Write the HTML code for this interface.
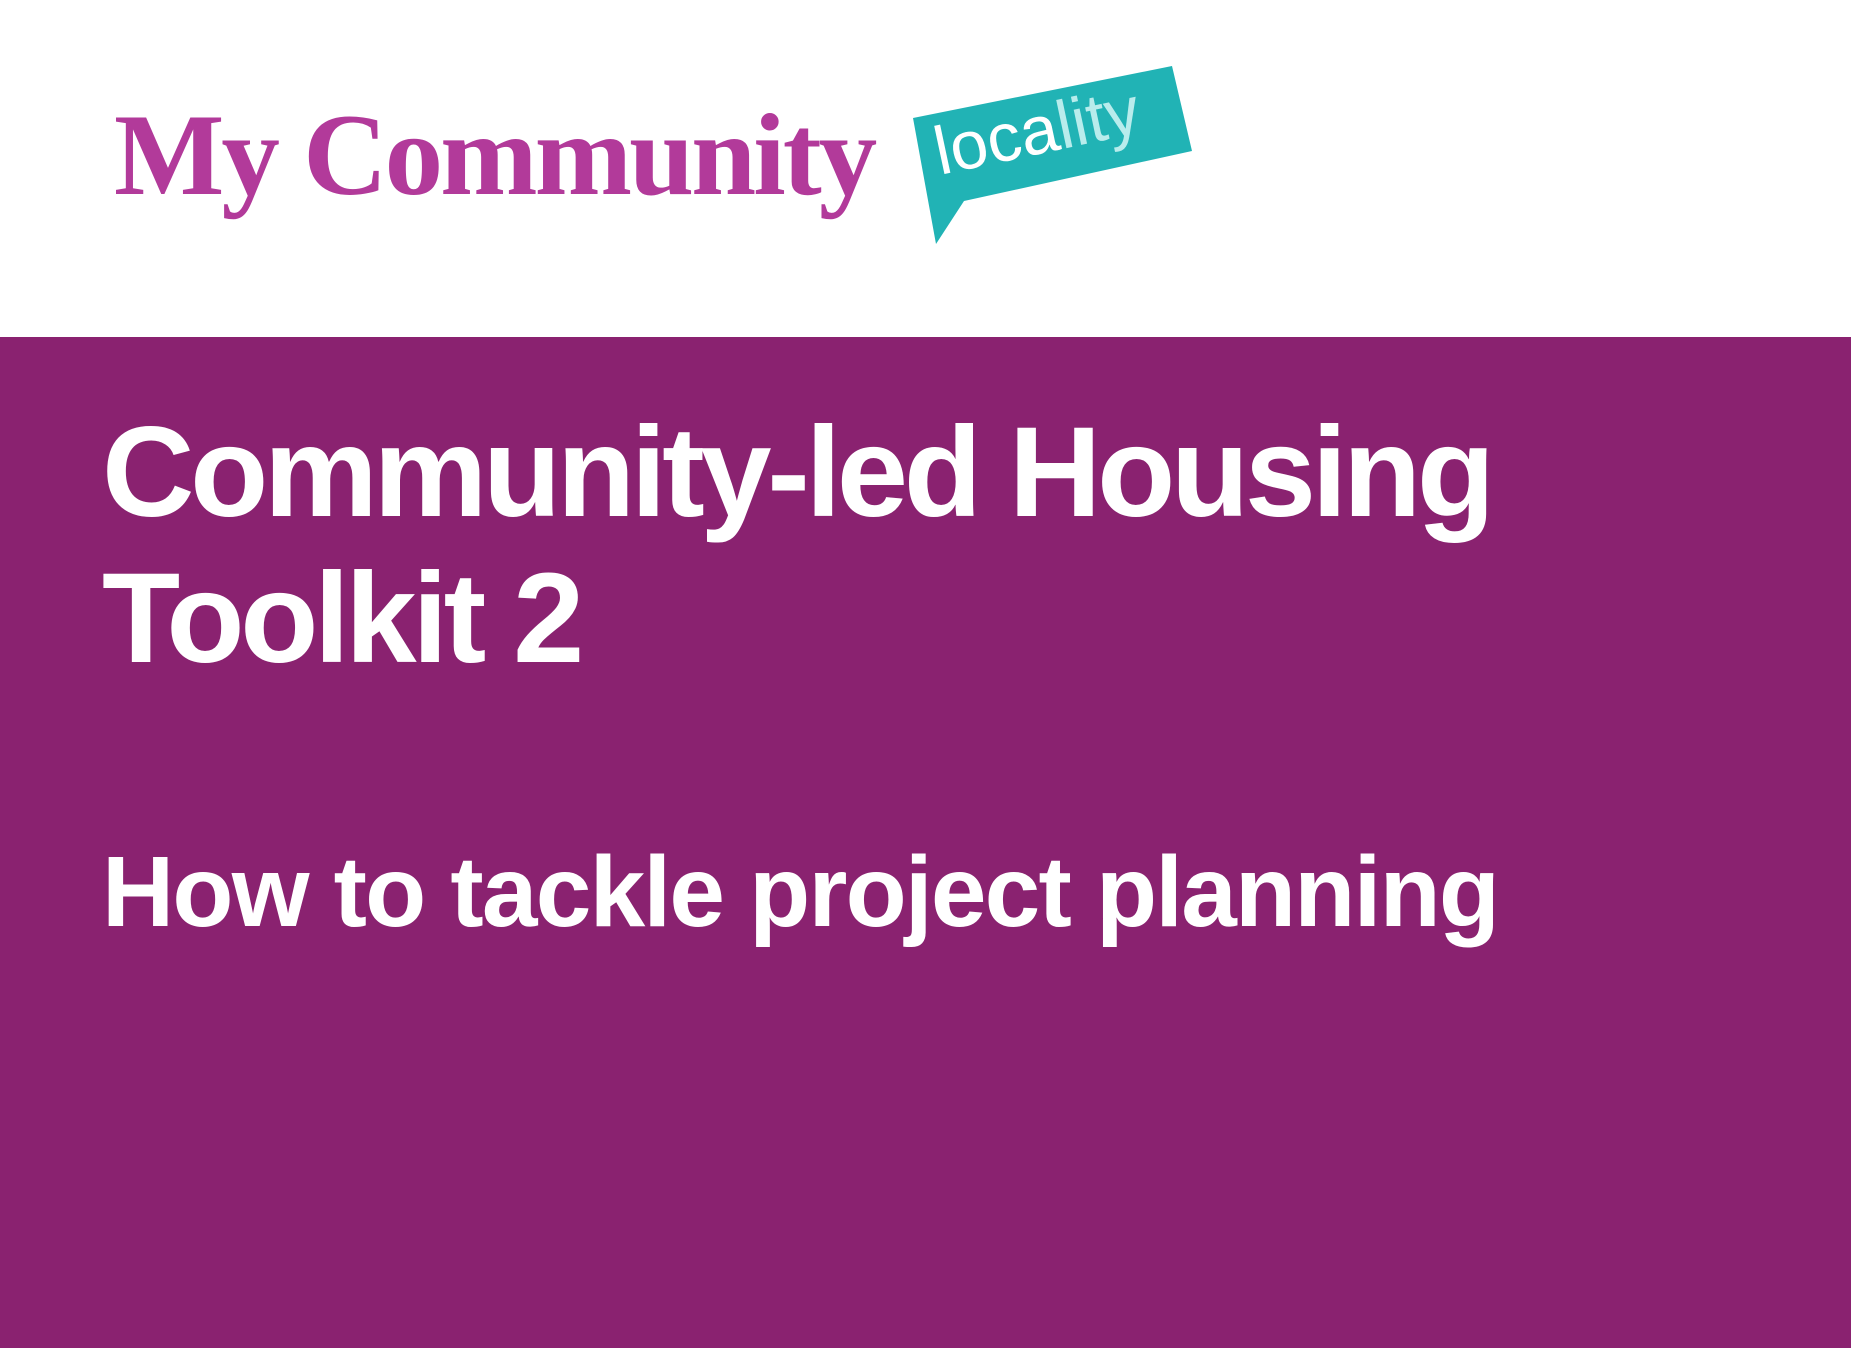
<!DOCTYPE html>
<html><head><meta charset="utf-8"><style>
html,body{margin:0;padding:0}
body{width:1851px;height:1348px;position:relative;background:#fff;overflow:hidden;font-family:"Liberation Sans",sans-serif}
.band{position:absolute;left:0;top:337px;width:1851px;height:1011px;background:#8a2270}
.logo{position:absolute;left:114px;top:89px;font-family:"Liberation Serif",serif;font-weight:bold;font-size:117px;color:#b23a9a;letter-spacing:-3px;white-space:nowrap}
.t{position:absolute;color:#fff;white-space:nowrap;font-weight:bold}
</style></head><body>
<div class="logo">My Community</div>
<svg style="position:absolute;left:0;top:0" width="1851" height="337">
<polygon points="913,118 1172,66 1192,151 964,201 936,244" fill="#21b3b5"/>
<text x="940" y="175" transform="rotate(-12 940 175)" font-family="Liberation Sans" font-size="68" fill="#fff">loca<tspan fill="#b8ecec">lity</tspan></text>
</svg>
<div class="band"></div>
<div class="t" style="left:102px;top:400px;font-size:128px;line-height:146px;letter-spacing:-4.3px">Community-led Housing<br>Toolkit 2</div>
<div class="t" style="left:102px;top:832px;font-size:100px;line-height:120px;letter-spacing:-1.8px">How to tackle project planning</div>
</body></html>
